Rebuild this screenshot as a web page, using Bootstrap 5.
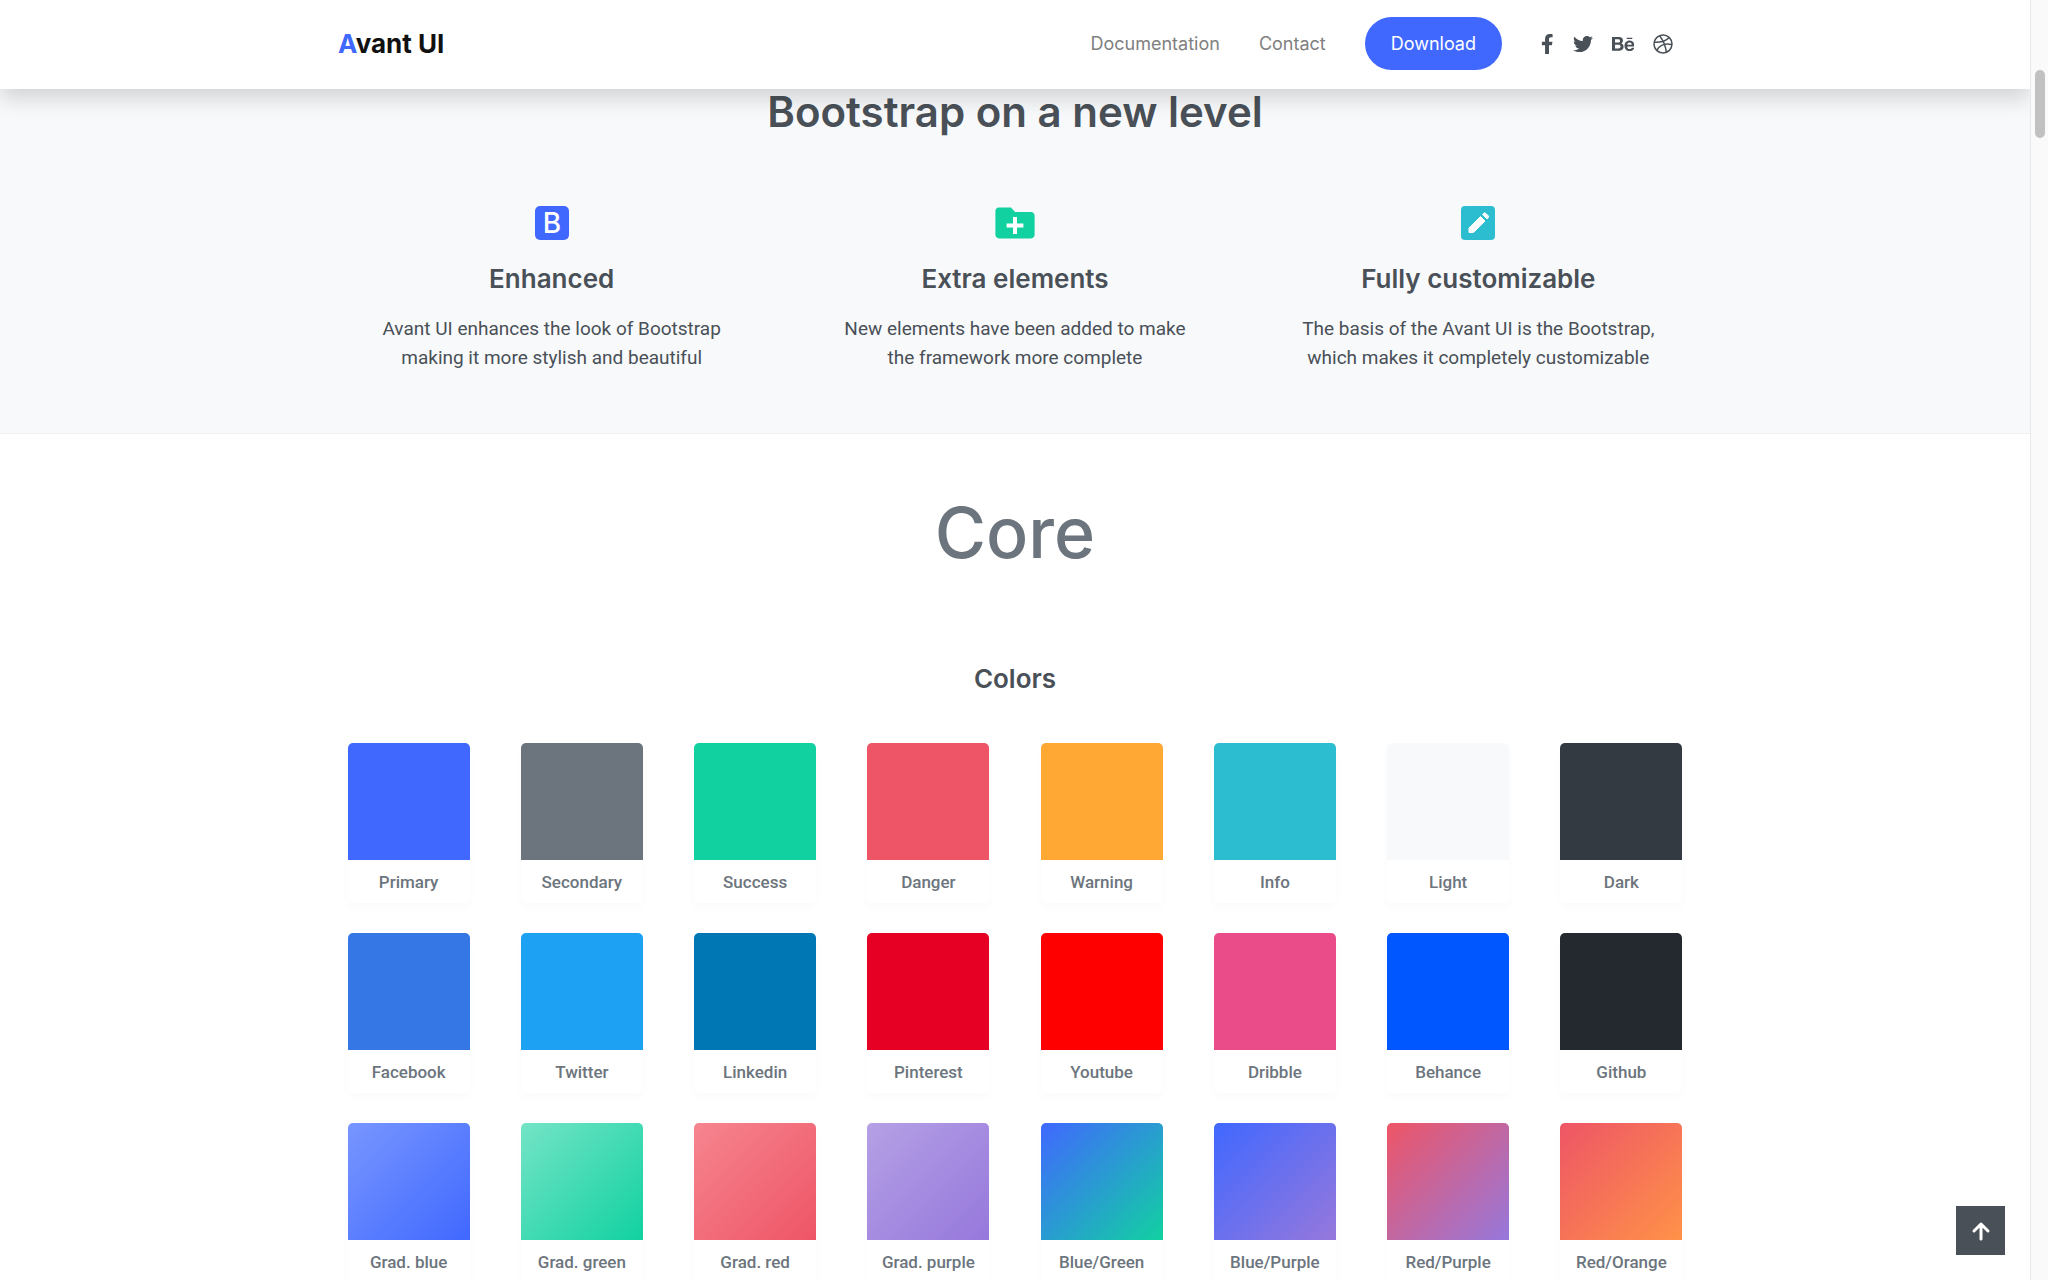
<!DOCTYPE html>
<html lang="en">
<head>
<meta charset="utf-8">
<meta name="viewport" content="width=device-width, initial-scale=1">
<title>Avant UI</title>
<link href="https://cdn.jsdelivr.net/npm/bootstrap@5.3.0/dist/css/bootstrap.min.css" rel="stylesheet">
<style>
:root{--brand:#4068ff;--ink:#495057;--muted:#6c757d;--mint:#11d1a1;--coral:#ee5566;--violet:#9678dc}
body{font-family:Inter,"Liberation Sans",sans-serif;font-size:18px;line-height:29px;color:var(--ink);background:#fff}
.viewport-pane{height:100vh}
.topbar{height:89px;background:#fff;box-shadow:0 10px 20px rgba(0,0,0,.15);z-index:10}
.wrap{width:100%;max-width:1390px;margin:0 auto}
.topbar .wrap{padding:0 18px 2px}
.brandmark{font-size:26px;font-weight:700;color:#111;text-decoration:none}
.brandmark span{color:var(--brand)}
.topnav{gap:39px;padding-right:19px}
.toplink{color:#808080;text-decoration:none}
.btn-download{--bs-btn-color:#fff;--bs-btn-bg:var(--brand);--bs-btn-hover-color:#fff;--bs-btn-hover-bg:#2f55e0;font-size:18px;line-height:29px;padding:12px 26px;border:0}
.social{gap:19px}
.social a{color:var(--ink);display:flex}
.social svg{height:20px;width:auto}
h1,h2,h3{margin:0;color:var(--ink);font-weight:600}
h3{font-size:26px;line-height:30px}
.intro{background:#f8f9fb;border-bottom:1px solid #eef0f2;padding-bottom:61px}
.intro h2{font-size:42px;line-height:46px}
.features{padding-top:64px}
.feature-icon{display:block;height:48px;width:48px;margin:0 auto 17px}
.feature p{font-family:Roboto,"Liberation Sans",sans-serif;font-size:19px;margin:20px 0 0}
.core{padding-top:60px}
.core h1{font-size:70px;line-height:78px;font-weight:500;color:var(--muted)}
.core h3{margin:92px 0 49px}
.palette{padding:0 2px}
.swatch{width:122px;margin:0 auto 30px;border-radius:5px;box-shadow:0 5px 10px rgba(0,0,0,.02);overflow:hidden;font-family:Roboto,"Liberation Sans",sans-serif;font-size:17px;line-height:24px;font-weight:500;color:var(--muted)}
.swatch-fill{height:117px}
.swatch-name{padding:10px 0 9px}
.f-primary{background:var(--brand)}
.f-secondary{background:var(--muted)}
.f-success{background:var(--mint)}
.f-danger{background:var(--coral)}
.f-warning{background:#ffa834}
.f-info{background:#2dbdd0}
.f-light{background:#f8f9fb}
.f-dark{background:#333a42}
.f-facebook{background:#3578e5}
.f-twitter{background:#1da1f2}
.f-linkedin{background:#0077b5}
.f-pinterest{background:#e60023}
.f-youtube{background:#f00}
.f-dribbble{background:#ea4c89}
.f-behance{background:#0057ff}
.f-github{background:#24282f}
.g-blue{background:linear-gradient(135deg,#7896ff,var(--brand))}
.g-green{background:linear-gradient(135deg,#74e4c6,var(--mint))}
.g-red{background:linear-gradient(135deg,#f6858f,var(--coral))}
.g-purple{background:linear-gradient(135deg,#b5a0e5,var(--violet))}
.g-blue-green{background:linear-gradient(135deg,var(--brand),var(--mint))}
.g-blue-purple{background:linear-gradient(135deg,var(--brand),var(--violet))}
.g-red-purple{background:linear-gradient(135deg,var(--coral),var(--violet))}
.g-red-orange{background:linear-gradient(135deg,var(--coral),#ff9248)}
.to-top{position:absolute;right:25px;bottom:25px;width:49px;height:49px;background:var(--ink);border:0;padding:0;z-index:5}
.scroll-track{width:18px;background:#fafafb;border-left:1px solid #e9e9ea;padding:70px 3px 0 4px}
.scroll-thumb{width:10px;height:68px;border-radius:5px;background:#c1c1c1}
</style>
<script src="https://cdn.jsdelivr.net/npm/bootstrap@5.3.0/dist/js/bootstrap.bundle.min.js"></script>
</head>
<body>
<div class="viewport-pane d-flex overflow-hidden">
<div class="flex-grow-1 position-relative overflow-hidden d-flex flex-column">
<header class="topbar position-relative flex-shrink-0">
  <div class="wrap h-100 d-flex align-items-center justify-content-between">
    <a class="brandmark" href="#"><span>A</span>vant UI</a>
    <nav class="topnav d-flex align-items-center">
      <a class="toplink" href="#docs">Documentation</a>
      <a class="toplink" href="#contact">Contact</a>
      <button type="button" class="btn btn-download rounded-pill">Download</button>
      <div class="social d-flex align-items-center">
        <a href="#facebook" aria-label="Facebook"><svg viewBox="0 0 320 512" fill="currentColor"><path d="M279.14 288l14.22-92.66h-88.91v-60.13c0-25.35 12.42-50.06 52.24-50.06h40.42V6.26S260.43 0 225.36 0c-73.22 0-121.08 44.38-121.08 124.72v70.62H22.89V288h81.39v224h100.17V288z"/></svg></a>
        <a href="#twitter" aria-label="Twitter"><svg viewBox="0 0 512 512" fill="currentColor"><path d="M459.37 151.716c.325 4.548.325 9.097.325 13.645 0 138.72-105.583 298.558-298.558 298.558-59.452 0-114.68-17.219-161.137-47.106 8.447.974 16.568 1.299 25.34 1.299 49.055 0 94.213-16.568 130.274-44.832-46.132-.975-84.792-31.188-98.112-72.772 6.498.974 12.995 1.624 19.818 1.624 9.421 0 18.843-1.3 27.614-3.573-48.081-9.747-84.143-51.98-84.143-102.985v-1.299c13.969 7.797 30.214 12.67 47.431 13.319-28.264-18.843-46.781-51.005-46.781-87.391 0-19.492 5.197-37.36 14.294-52.954 51.655 63.675 129.3 105.258 216.365 109.807-1.624-7.797-2.599-15.918-2.599-24.04 0-57.828 46.782-104.934 104.934-104.934 30.213 0 57.502 12.67 76.67 33.137 23.715-4.548 46.456-13.32 66.599-25.34-7.798 24.366-24.366 44.833-46.132 57.827 21.117-2.273 41.584-8.122 60.426-16.243-14.292 20.791-32.161 39.308-52.628 54.253z"/></svg></a>
        <a href="#behance" aria-label="Behance"><svg viewBox="0 0 576 512" fill="currentColor"><path d="M232 237.2c31.8-15.2 48.4-38.2 48.4-74 0-70.6-52.6-87.8-113.3-87.8H0v354.4h171.8c64.4 0 124.9-30.9 124.9-102.9 0-44.5-21.1-77.4-64.7-89.7zM77.9 135.9H151c28.1 0 53.4 7.9 53.4 40.5 0 30.1-19.7 42.2-47.5 42.2h-79v-82.7zm83.3 233.7H77.9V272h84.9c34.3 0 56 14.3 56 50.6 0 35.8-25.9 47-57.6 47zm358.5-240.7H376V94h143.7v34.9zM576 305.2c0-75.9-44.4-139.2-124.9-139.2-78.2 0-131.3 58.8-131.3 135.8 0 79.9 50.3 134.7 131.3 134.7 61.3 0 101-27.6 120.1-86.3H509c-6.7 21.9-34.3 33.5-55.7 33.5-41.3 0-63-24.2-63-65.3h185.1c.3-4.2.6-8.7.6-13.2zM390.4 274c2.3-33.7 24.7-54.8 58.5-54.8 35.4 0 53.2 20.8 56.2 54.8H390.4z"/></svg></a>
        <a href="#dribbble" aria-label="Dribbble"><svg viewBox="0 0 20 20" fill="none" stroke="currentColor" stroke-width="1.5"><circle cx="10" cy="10" r="9"/><path d="M6.600 1.800c3.300 4.200 5.700 9 6.800 16.400M1.200 8.300c6 .2 11.500-1 14.900-4.900M3.800 16.400c3-5.200 8.500-7.300 15.200-5.700"/></svg></a>
      </div>
    </nav>
  </div>
</header>
<main class="text-center">
  <section class="intro">
    <div class="wrap">
      <h2>Bootstrap on a new level</h2>
      <div class="features row g-0">
        <div class="feature col-4">
          <svg class="feature-icon" viewBox="0 0 48 48"><rect x="7" y="7" width="34" height="34" rx="5" fill="#4068ff"/><text x="24" y="34" text-anchor="middle" font-size="28" font-weight="500" fill="#fff">B</text></svg>
          <h3>Enhanced</h3>
          <p>Avant UI enhances the look of Bootstrap<br>making it more stylish and beautiful</p>
        </div>
        <div class="feature col-4">
          <svg class="feature-icon" viewBox="0 0 24 24"><path fill="#11d1a1" d="M20 6.500h-8L10 4.300H4c-1.100 0-1.800.8-1.800 1.800v11.800c0 1 .8 1.800 1.800 1.800h16c1 0 1.800-.8 1.800-1.800V8.300c0-1-.8-1.800-1.800-1.800z"/><path d="M12 9v8.500M7.800 13.250h8.400" stroke="#fff" stroke-width="2"/></svg>
          <h3>Extra elements</h3>
          <p>New elements have been added to make<br>the framework more complete</p>
        </div>
        <div class="feature col-4">
          <svg class="feature-icon" viewBox="0 0 48 48"><rect x="7" y="7" width="34" height="34" rx="4" fill="#2dbdd0"/><path fill="#fff" stroke="#fff" stroke-width="1" stroke-linejoin="round" d="M15 33.500v-4.500L26.500 17.500l4.500 4.500L19.500 33.500zM28.600 15.400l1.100-1.100a1.500 1.500 0 0 1 2 0l2.500 2.500a1.500 1.500 0 0 1 0 2L33.100 19.900z"/></svg>
          <h3>Fully customizable</h3>
          <p>The basis of the Avant UI is the Bootstrap,<br>which makes it completely customizable</p>
        </div>
      </div>
    </div>
  </section>
  <section class="core">
    <div class="wrap">
      <h1>Core</h1>
      <h3>Colors</h3>
      <div class="palette">
      <div class="row row-cols-8 g-0">
        <div class="col"><div class="swatch"><div class="swatch-fill f-primary"></div><div class="swatch-name">Primary</div></div></div>
        <div class="col"><div class="swatch"><div class="swatch-fill f-secondary"></div><div class="swatch-name">Secondary</div></div></div>
        <div class="col"><div class="swatch"><div class="swatch-fill f-success"></div><div class="swatch-name">Success</div></div></div>
        <div class="col"><div class="swatch"><div class="swatch-fill f-danger"></div><div class="swatch-name">Danger</div></div></div>
        <div class="col"><div class="swatch"><div class="swatch-fill f-warning"></div><div class="swatch-name">Warning</div></div></div>
        <div class="col"><div class="swatch"><div class="swatch-fill f-info"></div><div class="swatch-name">Info</div></div></div>
        <div class="col"><div class="swatch"><div class="swatch-fill f-light"></div><div class="swatch-name">Light</div></div></div>
        <div class="col"><div class="swatch"><div class="swatch-fill f-dark"></div><div class="swatch-name">Dark</div></div></div>
      </div>
      <div class="row row-cols-8 g-0">
        <div class="col"><div class="swatch"><div class="swatch-fill f-facebook"></div><div class="swatch-name">Facebook</div></div></div>
        <div class="col"><div class="swatch"><div class="swatch-fill f-twitter"></div><div class="swatch-name">Twitter</div></div></div>
        <div class="col"><div class="swatch"><div class="swatch-fill f-linkedin"></div><div class="swatch-name">Linkedin</div></div></div>
        <div class="col"><div class="swatch"><div class="swatch-fill f-pinterest"></div><div class="swatch-name">Pinterest</div></div></div>
        <div class="col"><div class="swatch"><div class="swatch-fill f-youtube"></div><div class="swatch-name">Youtube</div></div></div>
        <div class="col"><div class="swatch"><div class="swatch-fill f-dribbble"></div><div class="swatch-name">Dribble</div></div></div>
        <div class="col"><div class="swatch"><div class="swatch-fill f-behance"></div><div class="swatch-name">Behance</div></div></div>
        <div class="col"><div class="swatch"><div class="swatch-fill f-github"></div><div class="swatch-name">Github</div></div></div>
      </div>
      <div class="row row-cols-8 g-0">
        <div class="col"><div class="swatch"><div class="swatch-fill g-blue"></div><div class="swatch-name">Grad. blue</div></div></div>
        <div class="col"><div class="swatch"><div class="swatch-fill g-green"></div><div class="swatch-name">Grad. green</div></div></div>
        <div class="col"><div class="swatch"><div class="swatch-fill g-red"></div><div class="swatch-name">Grad. red</div></div></div>
        <div class="col"><div class="swatch"><div class="swatch-fill g-purple"></div><div class="swatch-name">Grad. purple</div></div></div>
        <div class="col"><div class="swatch"><div class="swatch-fill g-blue-green"></div><div class="swatch-name">Blue/Green</div></div></div>
        <div class="col"><div class="swatch"><div class="swatch-fill g-blue-purple"></div><div class="swatch-name">Blue/Purple</div></div></div>
        <div class="col"><div class="swatch"><div class="swatch-fill g-red-purple"></div><div class="swatch-name">Red/Purple</div></div></div>
        <div class="col"><div class="swatch"><div class="swatch-fill g-red-orange"></div><div class="swatch-name">Red/Orange</div></div></div>
      </div>
      </div>
    </div>
  </section>
</main>
<button type="button" class="to-top d-flex align-items-center justify-content-center" aria-label="Back to top"><svg width="20" height="20" viewBox="0 0 20 20" fill="none" stroke="#fff" stroke-width="3" stroke-linecap="round" stroke-linejoin="round"><path d="M10 18V3M3 10l7-7 7 7"/></svg></button>
</div>
<div class="scroll-track flex-shrink-0"><div class="scroll-thumb"></div></div>
</div>
</body>
</html>
